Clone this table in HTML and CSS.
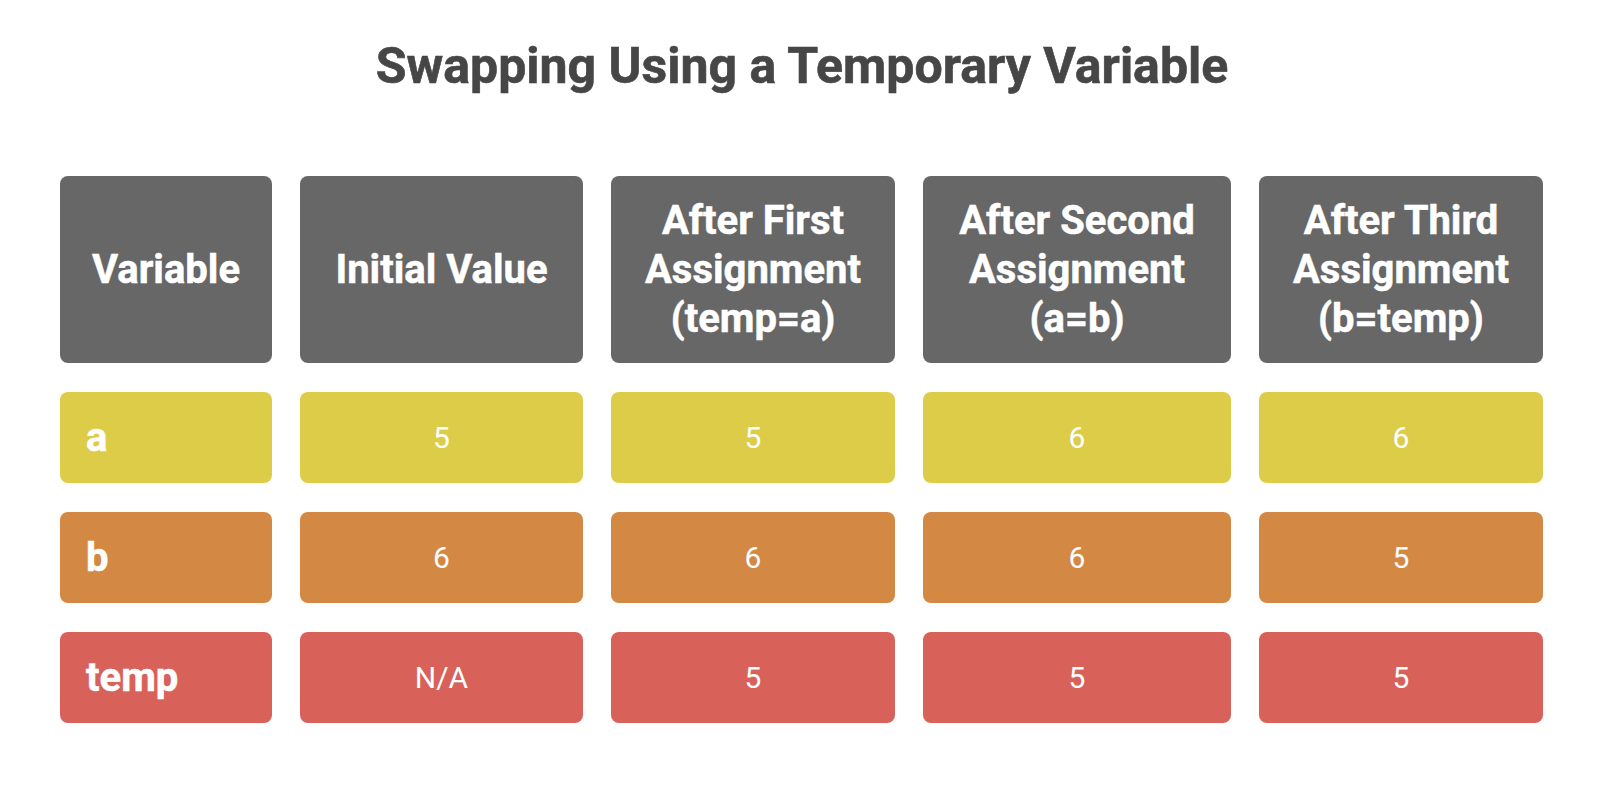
FILE: index.html
```html
<!DOCTYPE html>
<html lang="en">
<head>
<meta charset="utf-8">
<title>Swapping Using a Temporary Variable</title>
<link rel="stylesheet" href="styles.css">
</head>
<body>
<main class="page">
  <h1 class="title">Swapping Using a Temporary Variable</h1>
  <div class="grid">
    <div class="cell head">Variable</div>
    <div class="cell head">Initial Value</div>
    <div class="cell head">After First<br>Assignment<br>(temp=a)</div>
    <div class="cell head">After Second<br>Assignment<br>(a=b)</div>
    <div class="cell head">After Third<br>Assignment<br>(b=temp)</div>

    <div class="cell label row-a">a</div>
    <div class="cell value row-a">5</div>
    <div class="cell value row-a">5</div>
    <div class="cell value row-a">6</div>
    <div class="cell value row-a">6</div>

    <div class="cell label row-b">b</div>
    <div class="cell value row-b">6</div>
    <div class="cell value row-b">6</div>
    <div class="cell value row-b">6</div>
    <div class="cell value row-b">5</div>

    <div class="cell label row-t">temp</div>
    <div class="cell value row-t">N/A</div>
    <div class="cell value row-t">5</div>
    <div class="cell value row-t">5</div>
    <div class="cell value row-t">5</div>
  </div>
</main>
</body>
</html>
```

FILE: styles.css
```css
* { box-sizing: border-box; }
html, body { margin: 0; padding: 0; background: #ffffff; }
body { font-family: Roboto, "Liberation Sans", sans-serif; }
.page { width: 1604px; height: 800px; padding: 0 60px; }
.title {
  margin: 0;
  padding-top: 35px;
  height: 176px;
  text-align: center;
  font-size: 50px;
  line-height: 62px;
  font-weight: 700;
  color: #464646;
  -webkit-text-stroke: 0.6px #464646;
}
.grid {
  display: grid;
  grid-template-columns: 212px 283px 284px 308px 284px;
  grid-template-rows: 187px 91px 91px 91px;
  column-gap: 28px;
  row-gap: 29px;
}
.cell {
  border-radius: 8px;
  color: #ffffff;
  display: flex;
  align-items: center;
  justify-content: center;
  text-align: center;
}
.head {
  background: #676767;
  font-size: 40px;
  line-height: 49px;
  font-weight: 700;
  -webkit-text-stroke: 0.5px #ffffff;
}
.label {
  justify-content: flex-start;
  padding-left: 26px;
  font-size: 40px;
  font-weight: 700;
  -webkit-text-stroke: 0.5px #ffffff;
}
.value { font-size: 30px; font-weight: 400; }
.row-a { background: #ddcc48; }
.row-b { background: #d38844; }
.row-t { background: #d8625a; }
```
